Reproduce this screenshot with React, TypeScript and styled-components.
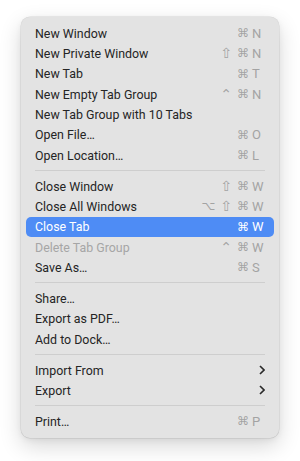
import React from 'react'
import styled, { createGlobalStyle } from 'styled-components'

const GlobalStyle = createGlobalStyle`
  html, body {
    margin: 0;
    padding: 0;
    background: #ffffff;
  }
  body {
    font-family: Roboto, "Liberation Sans", sans-serif;
    -webkit-font-smoothing: antialiased;
  }
`

const Page = styled.div`
  width: 300px;
  height: 461px;
  padding: 17px 21px 0;
  box-sizing: border-box;
`

const Menu = styled.div`
  width: 258px;
  box-sizing: border-box;
  padding: 6px 5px 6px;
  background: #e3e3e3;
  border-radius: 9px;
  box-shadow: 0 0 0 0.5px rgba(0, 0, 0, 0.12), 0 8px 22px rgba(0, 0, 0, 0.16),
    0 2px 6px rgba(0, 0, 0, 0.06);
  display: flex;
  flex-direction: column;
`

const Row = styled.div<{ $active?: boolean; $disabled?: boolean }>`
  height: 20.33px;
  display: flex;
  align-items: center;
  justify-content: space-between;
  padding: 0 6px 0 9px;
  border-radius: 5px;
  font-size: 12.4px;
  letter-spacing: 0;
  background: ${(p) => (p.$active ? '#4e8cf5' : 'transparent')};
  color: ${(p) => (p.$active ? '#ffffff' : p.$disabled ? '#a6a6a6' : '#252525')};
`

const Label = styled.span`
  white-space: nowrap;
`

const Shortcut = styled.span<{ $active?: boolean }>`
  display: flex;
  align-items: center;
  color: ${(p) => (p.$active ? '#ffffff' : '#a3a3a3')};
`

const Mods = styled.span`
  display: flex;
  align-items: center;
  gap: 5px;
  justify-content: flex-end;
  font-family: "DejaVu Sans", sans-serif;
  line-height: 1;
`

const Mod = styled.span<{ $size: number }>`
  font-size: ${(p) => p.$size}px;
`

const Key = styled.span`
  width: 16px;
  margin-left: 3px;
  text-align: left;
  font-size: 13px;
`

const Separator = styled.div`
  height: 10.67px;
  display: flex;
  align-items: center;
  padding: 0 9px;

  &::after {
    content: '';
    flex: 1;
    height: 1px;
    background: #cecece;
  }
`

const Chevron = styled.svg`
  width: 6px;
  height: 10px;
  margin-right: 3px;
`

const modSize: Record<string, number> = { '⌘': 12, '⇧': 14, '⌃': 14, '⌥': 12 }

type Item =
  | { sep: true }
  | {
      label: string
      mods?: string[]
      k?: string
      active?: boolean
      disabled?: boolean
      submenu?: boolean
    }

const items: Item[] = [
  { label: 'New Window', mods: ['⌘'], k: 'N' },
  { label: 'New Private Window', mods: ['⇧', '⌘'], k: 'N' },
  { label: 'New Tab', mods: ['⌘'], k: 'T' },
  { label: 'New Empty Tab Group', mods: ['⌃', '⌘'], k: 'N' },
  { label: 'New Tab Group with 10 Tabs' },
  { label: 'Open File…', mods: ['⌘'], k: 'O' },
  { label: 'Open Location…', mods: ['⌘'], k: 'L' },
  { sep: true },
  { label: 'Close Window', mods: ['⇧', '⌘'], k: 'W' },
  { label: 'Close All Windows', mods: ['⌥', '⇧', '⌘'], k: 'W' },
  { label: 'Close Tab', mods: ['⌘'], k: 'W', active: true },
  { label: 'Delete Tab Group', mods: ['⌃', '⌘'], k: 'W', disabled: true },
  { label: 'Save As…', mods: ['⌘'], k: 'S' },
  { sep: true },
  { label: 'Share…' },
  { label: 'Export as PDF…' },
  { label: 'Add to Dock…' },
  { sep: true },
  { label: 'Import From', submenu: true },
  { label: 'Export', submenu: true },
  { sep: true },
  { label: 'Print…', mods: ['⌘'], k: 'P' },
]

export default function App() {
  return (
    <Page>
      <GlobalStyle />
      <Menu>
        {items.map((it, i) => {
          if ('sep' in it) return <Separator key={i} />
          return (
            <Row key={i} $active={it.active} $disabled={it.disabled}>
              <Label>{it.label}</Label>
              {it.k && (
                <Shortcut $active={it.active}>
                  <Mods>
                    {it.mods?.map((m, j) => (
                      <Mod key={j} $size={modSize[m]}>
                        {m}
                      </Mod>
                    ))}
                  </Mods>
                  <Key>{it.k}</Key>
                </Shortcut>
              )}
              {it.submenu && (
                <Chevron viewBox="0 0 6 10">
                  <path d="M1 1 L5 5 L1 9" fill="none" stroke="#2a2a2a" strokeWidth="1.6" />
                </Chevron>
              )}
            </Row>
          )
        })}
      </Menu>
    </Page>
  )
}
